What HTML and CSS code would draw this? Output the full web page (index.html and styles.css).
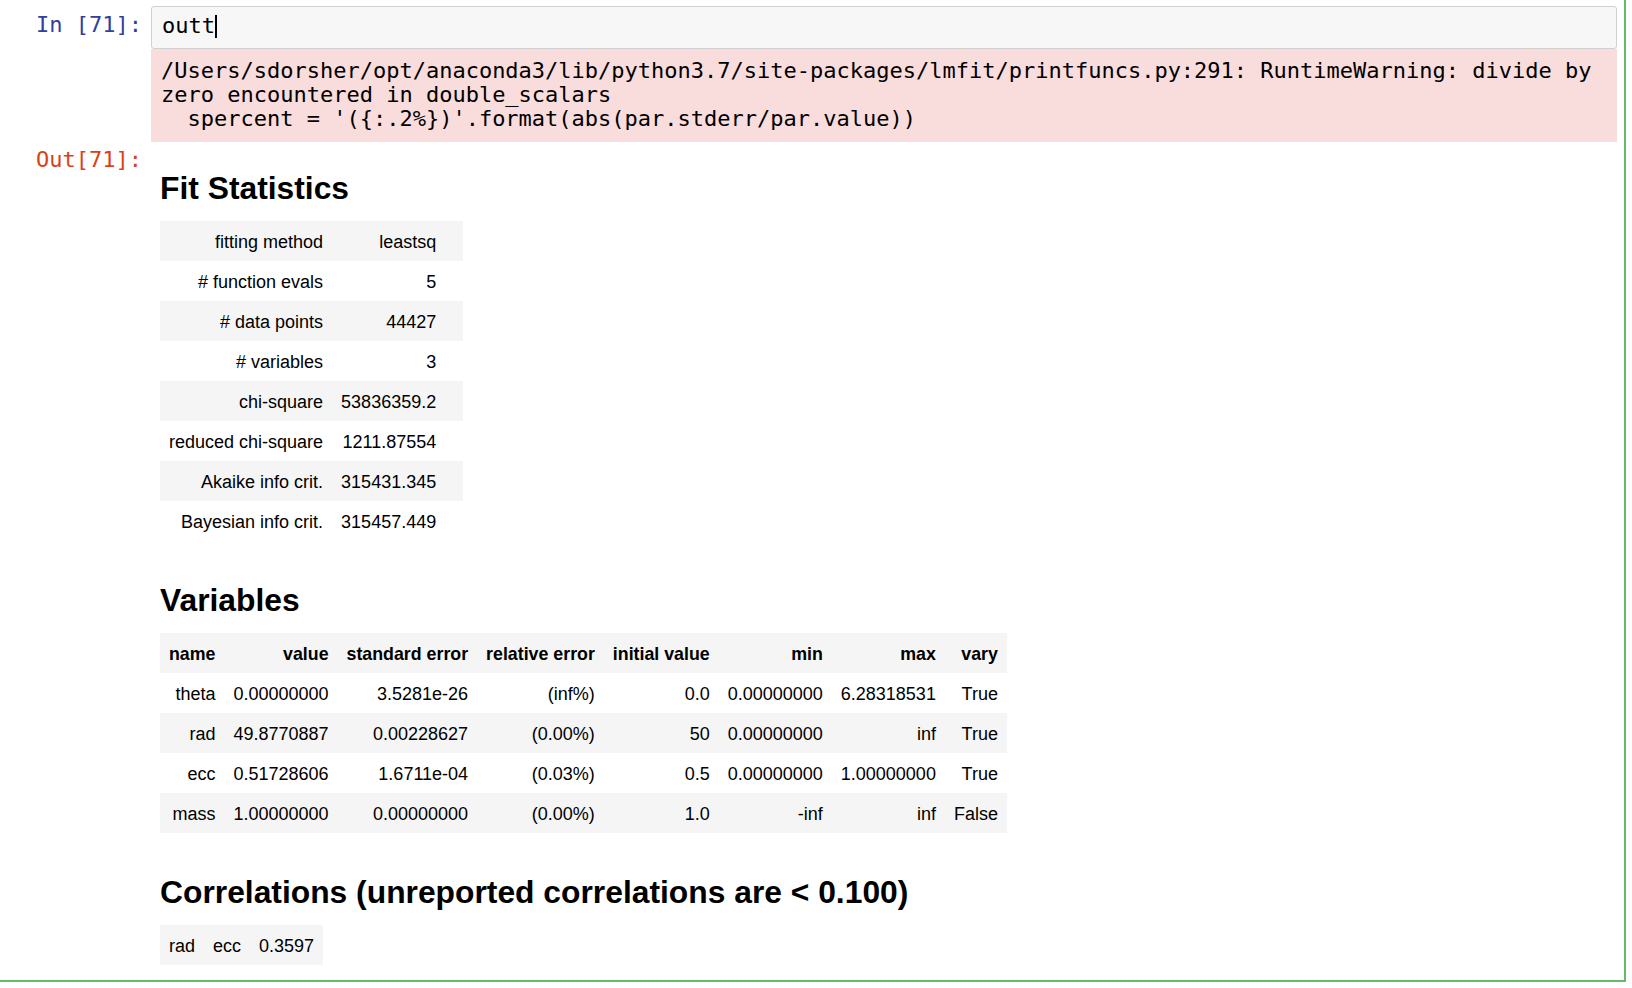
FILE: index.html
```html
<!DOCTYPE html>
<html lang="en">
<head>
<meta charset="utf-8">
<title>Notebook cell</title>
<link rel="stylesheet" href="styles.css">
</head>
<body>
<div class="cell">
  <div class="row">
    <div class="prompt prompt-in">In&nbsp;[71]:</div>
    <div class="input-area"><span class="code">outt</span><span class="cursor"></span></div>
  </div>
  <div class="row">
    <div class="prompt"></div>
    <pre class="stderr">/Users/sdorsher/opt/anaconda3/lib/python3.7/site-packages/lmfit/printfuncs.py:291: RuntimeWarning: divide by
zero encountered in double_scalars
  spercent = '({:.2%})'.format(abs(par.stderr/par.value))</pre>
  </div>
  <div class="row">
    <div class="prompt prompt-out">Out[71]:</div>
    <div class="rendered">
      <h2 class="first">Fit Statistics</h2>
      <table>
        <tr><td>fitting method</td><td>leastsq</td><td></td></tr>
        <tr><td># function evals</td><td>5</td><td></td></tr>
        <tr><td># data points</td><td>44427</td><td></td></tr>
        <tr><td># variables</td><td>3</td><td></td></tr>
        <tr><td>chi-square</td><td>53836359.2</td><td></td></tr>
        <tr><td>reduced chi-square</td><td>1211.87554</td><td></td></tr>
        <tr><td>Akaike info crit.</td><td>315431.345</td><td></td></tr>
        <tr><td>Bayesian info crit.</td><td>315457.449</td><td></td></tr>
      </table>
      <h2>Variables</h2>
      <table>
        <tr><th>name</th><th>value</th><th>standard error</th><th>relative error</th><th>initial value</th><th>min</th><th>max</th><th>vary</th></tr>
        <tr><td>theta</td><td>0.00000000</td><td>3.5281e-26</td><td>(inf%)</td><td>0.0</td><td>0.00000000</td><td>6.28318531</td><td>True</td></tr>
        <tr><td>rad</td><td>49.8770887</td><td>0.00228627</td><td>(0.00%)</td><td>50</td><td>0.00000000</td><td>inf</td><td>True</td></tr>
        <tr><td>ecc</td><td>0.51728606</td><td>1.6711e-04</td><td>(0.03%)</td><td>0.5</td><td>0.00000000</td><td>1.00000000</td><td>True</td></tr>
        <tr><td>mass</td><td>1.00000000</td><td>0.00000000</td><td>(0.00%)</td><td>1.0</td><td>-inf</td><td>inf</td><td>False</td></tr>
      </table>
      <h2>Correlations (unreported correlations are &lt; 0.100)</h2>
      <table>
        <tr><td>rad</td><td>ecc</td><td>0.3597</td></tr>
      </table>
    </div>
  </div>
</div>
</body>
</html>
```

FILE: styles.css
```css
* {
  box-sizing: border-box;
}

html,
body {
  margin: 0;
  padding: 0;
  background: #ffffff;
}

body {
  width: 1632px;
  height: 988px;
  overflow: hidden;
  color: #000000;
  font-family: "Liberation Sans", Arial, sans-serif;
}

.cell {
  width: 1626px;
  padding: 6px 7px 0 0;
  border-right: 2px solid #66bb6a;
  border-bottom: 2px solid #66bb6a;
}

.row {
  display: flex;
  align-items: flex-start;
}

.prompt {
  flex: 0 0 151px;
  padding-right: 9px;
  text-align: right;
  font-family: "DejaVu Sans Mono", monospace;
  font-size: 22px;
  line-height: 23px;
  white-space: nowrap;
}

.prompt-in {
  color: #303f9f;
  padding-top: 7px;
}

.prompt-out {
  color: #d84315;
  padding-top: 6px;
}

.input-area {
  flex: 1;
  height: 43px;
  padding: 7px 10px 11px 10px;
  background: #f7f7f7;
  border: 1px solid #cfcfcf;
  border-radius: 3px;
  font-family: "DejaVu Sans Mono", monospace;
  font-size: 22px;
  line-height: 23px;
  white-space: pre;
}

.cursor {
  display: inline-block;
  width: 2px;
  height: 23px;
  background: #000000;
  vertical-align: -5px;
}

.stderr {
  flex: 1;
  margin: 0;
  padding: 10px 10px 11px 10px;
  background: #f9dcdc;
  font-family: "DejaVu Sans Mono", monospace;
  font-size: 22px;
  line-height: 24px;
  white-space: pre;
  color: #000000;
}

.rendered {
  flex: 1;
  padding: 0 0 15px 9px;
}

.rendered h2 {
  margin: 41px 0 15px 0;
  font-size: 31.8px;
  line-height: 36px;
  font-weight: bold;
}

.rendered h2.first {
  margin-top: 28px;
}

.rendered table {
  border-collapse: collapse;
  border-spacing: 0;
  font-size: 18px;
  line-height: 22px;
}

.rendered td,
.rendered th {
  padding: 10px 9px 8px 9px;
  text-align: right;
  white-space: nowrap;
}

.rendered th {
  font-weight: bold;
  font-size: 17.8px;
}

.rendered tr:nth-child(odd) {
  background: #f5f5f5;
}
```
